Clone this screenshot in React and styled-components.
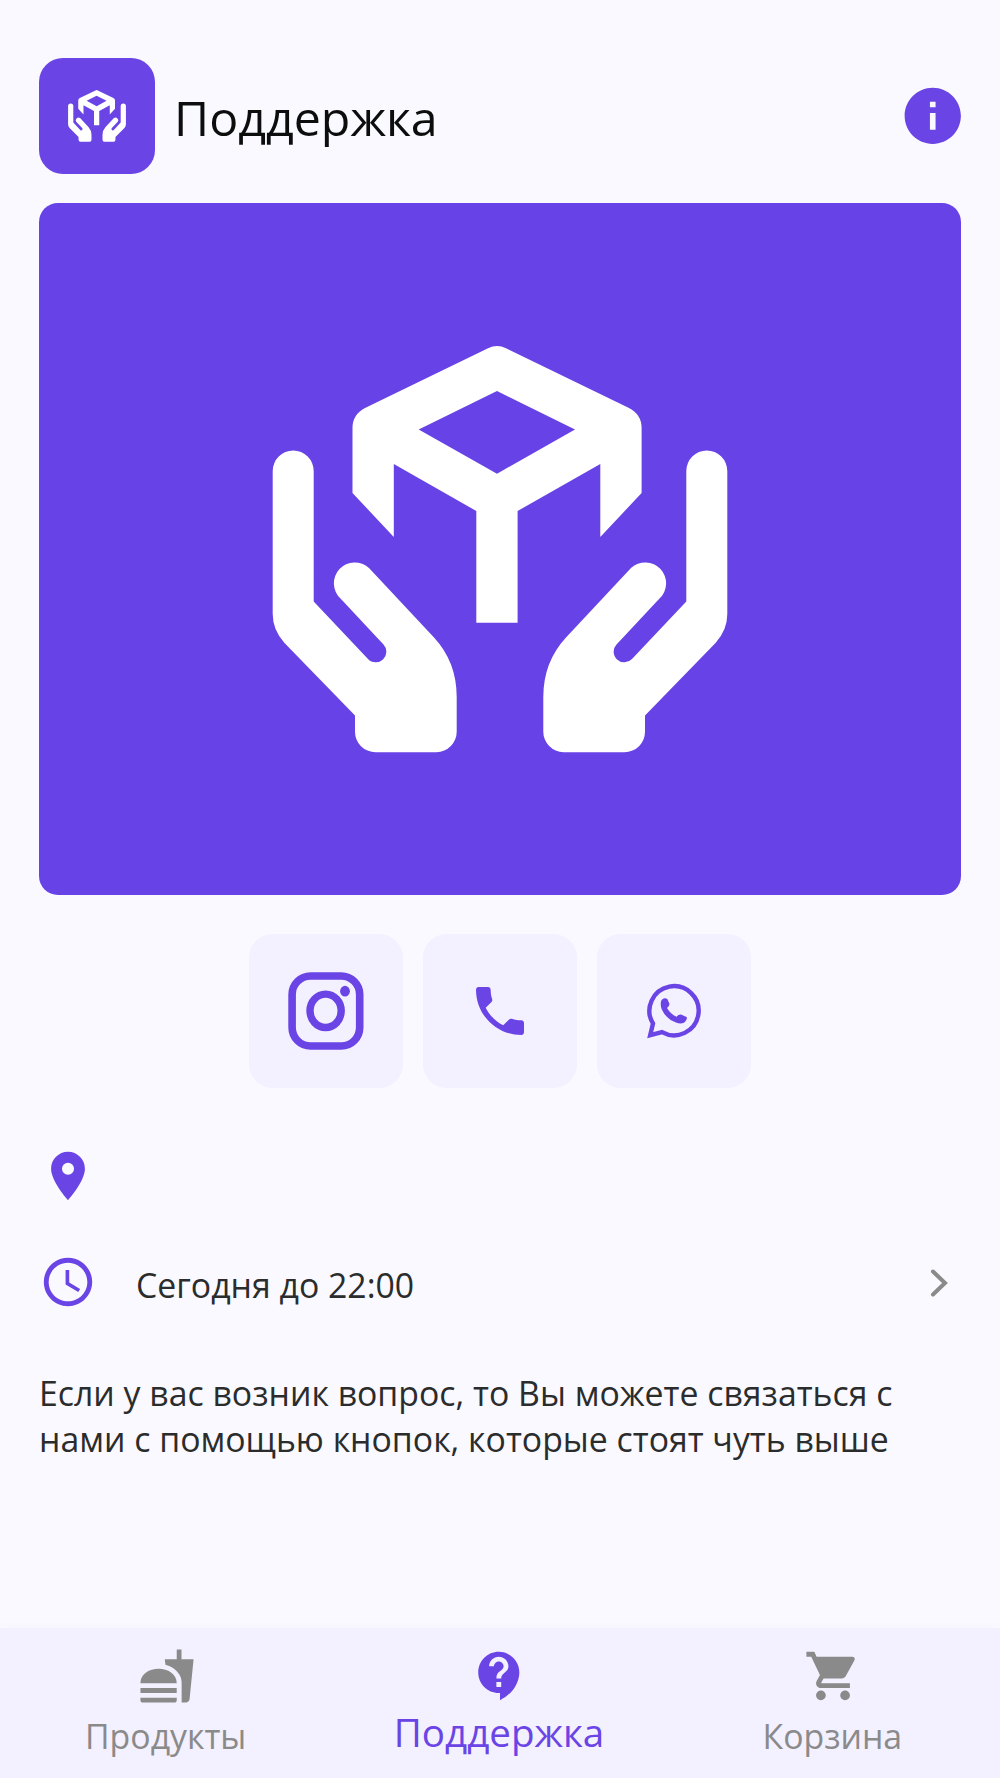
import styled, { createGlobalStyle } from "styled-components";
import {
	MdAccessTime,
	MdContactSupport,
	MdFastfood,
	MdInfo,
	MdLocationOn,
	MdShoppingCart,
} from "react-icons/md";

const colors = {
	page: "#f9f9ff",
	surface: "#f3f0ff",
	primary: "#6a44e5",
	hero: "#6742e6",
	title: "#0c0d0d",
	text: "#2b2c2c",
	muted: "#8a8a8a",
};

const hand =
	"M272.7 471a20.5 20.5 0 0 1 41 0V601.5L368 659A10.6 10.6 0 0 0 383.5 644.5L340.5 598.5A20.5 20.5 0 0 1 369 568L434 637.5Q456.7 662 456.7 697V731.5A20.5 20.5 0 0 1 436.5 752.2H375.5A20.5 20.5 0 0 1 355 731.5V715.5L284.5 643Q272.7 630 272.7 614Z";

const GiftLogo = () => (
	<svg viewBox="272 345 456 408" fill="#fff" aria-hidden="true">
		<path d={hand} />
		<path d={hand} transform="translate(1000 0) scale(-1 1)" />
		<path
			fillRule="evenodd"
			d="M488 348.3Q497 343.5 506 348.3L629 408Q641.6 414.5 641.6 428V493L600.3 537V464L517.6 511V622.8H476.3V511L393.8 464V537L352.5 493V428Q352.5 414.5 365 408ZM497 391L418.7 429.4 497 473.7 575 429.4Z"
		/>
	</svg>
);

const InstagramIcon = () => (
	<svg width="76" height="78" viewBox="0 0 76 78" fill="none">
		<rect x="4.1" y="4" width="67.6" height="70" rx="18.5" stroke="currentColor" strokeWidth="7.6" />
		<ellipse cx="37.6" cy="38.8" rx="15.6" ry="16.7" stroke="currentColor" strokeWidth="7.4" />
		<ellipse cx="57" cy="19.2" rx="4.9" ry="5.4" fill="currentColor" />
	</svg>
);

const PhoneIcon = () => (
	<svg width="64" height="64" viewBox="0 0 24 24" fill="currentColor">
		<path d="M6.62 10.79c1.44 2.83 3.76 5.14 6.59 6.59l2.2-2.2c.27-.27.67-.36 1.02-.24 1.12.37 2.33.57 3.57.57.55 0 1 .45 1 1V20c0 .55-.45 1-1 1-9.39 0-17-7.61-17-17 0-.55.45-1 1-1h3.5c.55 0 1 .45 1 1 0 1.25.2 2.45.57 3.57.11.35.03.74-.25 1.02l-2.2 2.2z" />
	</svg>
);

const WhatsappIcon = () => (
	<svg width="54" height="54" viewBox="0 0 54 54" fill="none" overflow="visible">
		<path
			d="M6 39.5A24.6 24.6 0 1 1 15 48.2L3.2 51.2Z"
			stroke="currentColor"
			strokeWidth="4.4"
		/>
		<path
			d="M14 17.5C14.5 14.5 18.5 13.2 20.5 15.2L22.5 20Q22.5 22 20 24Q23.5 30 29.5 32.8Q31.5 30.2 34 30.5L39.5 33Q40.5 34 39.3 36C37.5 39.8 33.5 40.3 29 38.6Q19 35 14.8 25.5Q13.2 21.5 14 17.5Z"
			fill="currentColor"
		/>
	</svg>
);

const tabs = [
	{ label: "Продукты", icon: MdFastfood },
	{ label: "Поддержка", icon: MdContactSupport, active: true },
	{ label: "Корзина", icon: MdShoppingCart },
];

const App = () => {
	return (
		<Screen>
			<GlobalStyle />
			<Header>
				<Badge>
					<GiftLogo />
				</Badge>
				<Title>Поддержка</Title>
				<InfoButton aria-label="info">
					<MdInfo size={67.5} />
				</InfoButton>
			</Header>

			<Hero>
				<GiftLogo />
			</Hero>

			<Contacts>
				<ContactButton aria-label="instagram">
					<InstagramIcon />
				</ContactButton>
				<ContactButton aria-label="phone">
					<PhoneIcon />
				</ContactButton>
				<ContactButton aria-label="whatsapp">
					<WhatsappIcon />
				</ContactButton>
			</Contacts>

			<InfoRow>
				<MdLocationOn size={58} />
			</InfoRow>
			<InfoRow>
				<MdAccessTime size={58} />
				<span>Сегодня до 22:00</span>
				<Chevron width="20" height="32" viewBox="0 0 20 32">
					<path d="M3 4.5L15 16 3 27.5" />
				</Chevron>
			</InfoRow>

			<Description>
				Если у вас возник вопрос, то Вы можете связаться с нами с помощью
				кнопок, которые стоят чуть выше
			</Description>

			<TabBar>
				{tabs.map(({ label, icon: Icon, active }) => (
					<Tab key={label} $active={active}>
						<Icon size={58} />
						<span>{label}</span>
					</Tab>
				))}
			</TabBar>
		</Screen>
	);
};

export default App;

const GlobalStyle = createGlobalStyle`
	* {
		box-sizing: border-box;
	}

	body {
		margin: 0;
		background: ${colors.page};
		font-family: "Open Sans", "Noto Sans", sans-serif;
	}

	svg {
		display: block;
		flex-shrink: 0;
	}

	button {
		border: 0;
		padding: 0;
		background: none;
		font: inherit;
	}
`;

const Screen = styled.div`
	display: flex;
	flex-direction: column;
	width: 1000px;
	height: 1778px;
	padding-top: 58px;
	overflow: hidden;
	background: ${colors.page};
`;

const Header = styled.header`
	display: flex;
	align-items: center;
	height: 116px;
	padding: 0 39px;
`;

const Badge = styled.div`
	display: flex;
	align-items: center;
	justify-content: center;
	width: 116px;
	height: 116px;
	border-radius: 24px;
	background: ${colors.primary};

	svg {
		width: 58px;
	}
`;

const Title = styled.h1`
	flex: 1;
	margin: 2px 0 0 19px;
	color: ${colors.title};
	font-size: 48.3px;
	font-weight: 400;
	line-height: 64px;
`;

const InfoButton = styled.button`
	margin-right: -5px;
	color: ${colors.primary};
`;

const Hero = styled.div`
	display: flex;
	justify-content: center;
	height: 692px;
	margin: 29px 39px 0;
	padding-top: 142px;
	border-radius: 19px;
	background: ${colors.hero};

	svg {
		width: 456px;
		height: 408px;
	}
`;

const Contacts = styled.div`
	display: flex;
	justify-content: center;
	gap: 20px;
	margin-top: 39px;
`;

const ContactButton = styled.button`
	display: flex;
	align-items: center;
	justify-content: center;
	width: 154px;
	height: 154px;
	border-radius: 24px;
	background: ${colors.surface};
	color: ${colors.primary};
`;

const InfoRow = styled.div`
	display: flex;
	align-items: center;
	height: 58px;
	margin: 59px 50px 0 39px;
	color: ${colors.primary};

	& + & {
		margin-top: 48px;
	}

	span {
		flex: 1;
		margin: 5px 0 0 39px;
		color: ${colors.text};
		font-size: 33.8px;
		line-height: 46px;
	}
`;

const Chevron = styled.svg`
	margin-top: 2px;
	fill: none;
	stroke: ${colors.muted};
	stroke-width: 4;
	stroke-linecap: round;
`;

const Description = styled.p`
	margin: 59px 80px 0 39px;
	color: ${colors.text};
	font-size: 33.8px;
	line-height: 46px;
`;

const TabBar = styled.nav`
	display: grid;
	grid-template-columns: repeat(3, 1fr);
	height: 150px;
	margin-top: auto;
	background: ${colors.surface};
	box-shadow: 0 -2px 10px rgba(0, 0, 0, 0.02);
`;

const Tab = styled.button`
	display: flex;
	flex-direction: column;
	align-items: center;
	padding-top: 19px;
	color: ${({ $active }) => ($active ? colors.primary : colors.muted)};

	span {
		margin: ${({ $active }) => ($active ? "1px" : "5px")} 2px 0 0;
		font-size: ${({ $active }) => ($active ? "38.6px" : "33.8px")};
		line-height: 52px;
	}
`;
